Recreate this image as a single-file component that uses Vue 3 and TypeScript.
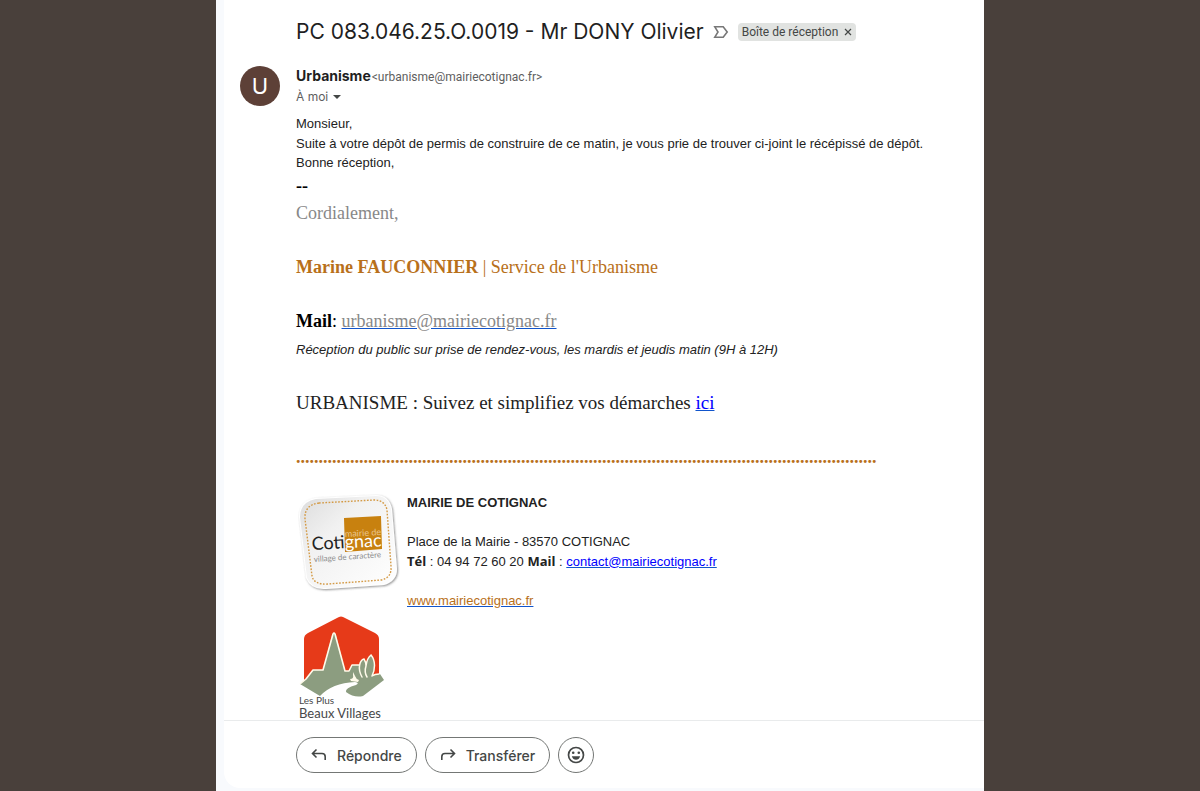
<script setup lang="ts">
const subject = 'PC 083.046.25.O.0019 - Mr DONY Olivier'
const sender = { name: 'Urbanisme', email: 'urbanisme@mairiecotignac.fr' }
const contactEmail = 'contact@mairiecotignac.fr'
const dots = '.'.repeat(129)
</script>

<template>
  <div class="window">
    <main class="mail">
      <div class="scroll">
        <header class="subject-row">
          <h1>{{ subject }}</h1>
          <button class="important" type="button" aria-label="Marquer comme important">
            <svg width="16" height="14" viewBox="0 0 16 14">
              <path d="M1.8 1.8H10.2L14.2 7L10.2 12.2H1.8L5 7Z" fill="none" stroke="#777" stroke-width="1.6" />
            </svg>
          </button>
          <span class="chip">
            Boîte de réception
            <button type="button" aria-label="Retirer le libellé">
              <svg width="8" height="8" viewBox="0 0 8 8">
                <path d="M1 1L7 7M7 1L1 7" stroke="#444746" stroke-width="1.2" />
              </svg>
            </button>
          </span>
        </header>

        <div class="message">
          <div class="avatar" aria-hidden="true">U</div>
          <div class="content">
            <div class="from">
              <strong>{{ sender.name }}</strong>
              <span>&lt;{{ sender.email }}&gt;</span>
            </div>
            <button class="to" type="button">
              À moi
              <svg width="8" height="4" viewBox="0 0 8 4"><path d="M0 0H8L4 4Z" fill="#444746" /></svg>
            </button>

            <article class="body">
              <p>Monsieur,</p>
              <p>Suite à votre dépôt de permis de construire de ce matin, je vous prie de trouver ci-joint le récépissé de dépôt.</p>
              <p>Bonne réception,</p>

              <section class="signature">
                <p class="dashes">--</p>
                <p class="regards">Cordialement,</p>
                <p class="spaced brown"><b>Marine FAUCONNIER</b> | Service de l'Urbanisme</p>
                <p class="spaced black"><b>Mail</b>: <a class="grey" :href="`mailto:${sender.email}`">{{ sender.email }}</a></p>
                <p class="hours">Réception du public sur prise de rendez-vous, les mardis et jeudis matin (9H à 12H)</p>
                <p class="online">URBANISME : Suivez et simplifiez vos démarches <a href="#">ici</a></p>
                <p class="spaced brown" aria-hidden="true"><b>{{ dots }}</b></p>
              </section>

              <div class="town">
                <div class="logos">
                  <svg width="105" height="106" viewBox="0 0 105 106" role="img" aria-label="Mairie de Cotignac">
                    <defs>
                      <linearGradient id="paper" x1="0" y1="0" x2="1" y2="1">
                        <stop offset="0" stop-color="#dcdcdc" />
                        <stop offset=".35" stop-color="#f1f1f1" />
                        <stop offset="1" stop-color="#fff" />
                      </linearGradient>
                      <filter id="shadow" x="-10%" y="-10%" width="125%" height="125%">
                        <feDropShadow dx="1" dy="1" stdDeviation="1" flood-color="#555" flood-opacity=".65" />
                      </filter>
                    </defs>
                    <path d="M19 8L80 5Q93 5 96 19L101 79Q101 91 88 95L30 99Q15 100 10 88L3 27Q3 11 19 8Z" fill="#fff" filter="url(#shadow)" />
                    <path d="M20 9L80 6Q92 6 95 19L100 79Q100 90 88 94L30 98Q16 99 11 88L4 27Q4 12 20 9Z" fill="url(#paper)" />
                    <path d="M23 13L78 10Q89 10 91 20L95 76Q96 88 85 90L32 94Q18 95 16 86L9 29Q8 15 23 13Z" fill="none" stroke="#d49a45" stroke-width="1.4" stroke-dasharray="1.7 1.5" />
                    <path d="M48 28L85 26L86 59L49 62Z" fill="#c8810f" />
                    <g font-family="Lato, sans-serif">
                      <text x="49" y="47" font-size="9" fill="#e9c48d" transform="rotate(-3 49 47)">mairie de</text>
                      <text x="16" y="60" font-size="18" fill="#222" transform="rotate(-3 16 60)">Coti<tspan fill="#fff">gnac</tspan></text>
                      <text x="18" y="72" font-size="8" fill="#8c8c8c" transform="rotate(-4 18 72)">village de caractère</text>
                    </g>
                  </svg>
                  <svg class="villages" width="96" height="110" viewBox="0 0 96 110" role="img" aria-label="Les Plus Beaux Villages">
                    <path d="M8 71V29Q8 25 12 23L41 8Q45 5 49 8L79 23Q83 25 83 29V64L66 66L50 70L20 68Z" fill="#e63a19" />
                    <path d="M4 74L10 69L17 60H27L36 25Q38 21 40 25L49 61H53L56 55H66V66L84 64L88 70L67 86Q58 88 50 82Q49 78 60 75Q64 73 59 72Q36 73 24 86Z" fill="#8c9d80" />
                    <path d="M4 74L10 69L17 60H27L37 24Q38 22 39 24L49 61H53L56 55H65" fill="none" stroke="#fffbea" stroke-width="1.6" stroke-linejoin="round" />
                    <path d="M66 67C61 58 64 50 68 49Q70 52 70 56Q71 48 75 45C79 51 80 60 76 66Z" fill="#8c9d80" />
                    <path d="M66 67C61 58 64 50 68 49Q70 52 70 56Q71 48 75 45C80 51 79 60 76 66M70 56Q68 62 71 67M76 66Q79 64 83 64" fill="none" stroke="#fffbea" stroke-width="1.5" stroke-linecap="round" />
                    <path d="M57 62L59 66Q60 69 63 70L62 72L55 71L54 69Q58 69 57 65Z" fill="#fffbea" />
                    <g font-family="Lato, sans-serif" fill="#48484a">
                      <text x="3" y="94" font-size="10">Les Plus</text>
                      <text x="3" y="108" font-size="13">Beaux Villages</text>
                    </g>
                  </svg>
                </div>
                <address>
                  <p><b>MAIRIE DE COTIGNAC</b></p>
                  <p class="gap">Place de la Mairie - 83570 COTIGNAC</p>
                  <p><b class="label">Tél</b> : 04 94 72 60 20 <b class="label">Mail</b> : <a :href="`mailto:${contactEmail}`">{{ contactEmail }}</a></p>
                  <p class="gap"><a class="site" href="#">www.mairiecotignac.fr</a></p>
                </address>
              </div>
            </article>
          </div>
        </div>
      </div>

      <footer class="actions">
        <button class="pill" type="button">
          <svg width="16" height="14" viewBox="0 0 16 14" fill="none" stroke="#444746" stroke-width="1.6">
            <path d="M5.5 1.5L1.5 5.5L5.5 9.5M1.5 5.5H11Q14.2 5.5 14.2 8.7V12" />
          </svg>
          Répondre
        </button>
        <button class="pill" type="button">
          <svg width="16" height="14" viewBox="0 0 16 14" fill="none" stroke="#444746" stroke-width="1.6">
            <path d="M10.5 1.5L14.5 5.5L10.5 9.5M14.5 5.5H5Q1.8 5.5 1.8 8.7V12" />
          </svg>
          Transférer
        </button>
        <button class="pill round" type="button" aria-label="Ajouter une réaction">
          <svg width="18" height="18" viewBox="0 0 18 18">
            <circle cx="9" cy="9" r="7.5" fill="none" stroke="#444746" stroke-width="1.7" />
            <circle cx="6.2" cy="6.8" r="1.3" fill="#444746" />
            <circle cx="11.8" cy="6.8" r="1.3" fill="#444746" />
            <path d="M4.8 10.3H13.2Q12 13.8 9 13.8Q6 13.8 4.8 10.3Z" fill="#444746" />
          </svg>
        </button>
      </footer>
    </main>
  </div>
</template>

<style>
body {
  margin: 0;
  background: #49403b;
}
</style>

<style scoped>
.window {
  box-sizing: border-box;
  width: 64%;
  height: 100vh;
  margin: 0 auto;
  padding: 0 0 3px 8px;
  background: #f8fafd;
  font-family: Inter, "Liberation Sans", sans-serif;
  color: #1f1f1f;
}
.mail {
  display: flex;
  flex-direction: column;
  height: 100%;
  background: #fff;
  border-radius: 0 0 0 16px;
}
.scroll {
  flex: 1;
  min-height: 0;
  overflow-y: auto;
  scrollbar-width: none;
}
h1, p {
  margin: 0;
}
button {
  padding: 0;
  border: 0;
  background: none;
  font: inherit;
  color: inherit;
  cursor: pointer;
}
svg {
  display: block;
}
.subject-row {
  display: flex;
  align-items: center;
  padding: 18px 16px 0 72px;
}
h1 {
  font-size: 21px;
  line-height: 28px;
  font-weight: 400;
}
.important {
  margin: 0 9px 0 9px;
}
.chip {
  display: flex;
  align-items: center;
  gap: 6px;
  padding: 0 4px;
  border-radius: 4px;
  background: #e1e3e1;
  color: #444746;
  font-family: Roboto, sans-serif;
  font-size: 12px;
  line-height: 18px;
}
.message {
  display: flex;
  gap: 16px;
  padding: 20px 16px 0;
}
.avatar {
  flex: none;
  width: 40px;
  height: 40px;
  border-radius: 50%;
  background: #5d4037;
  color: #fff;
  font-size: 22px;
  line-height: 40px;
  text-align: center;
}
.from {
  display: flex;
  align-items: baseline;
  gap: 1px;
  line-height: 20px;
}
.from strong {
  font-size: 14px;
}
.from span {
  font-family: Roboto, sans-serif;
  font-size: 12px;
  color: #5e5e5e;
}
.to {
  display: flex;
  align-items: center;
  gap: 5px;
  font-size: 12px;
  line-height: 20px;
  color: #5e5e5e;
}
.body {
  padding-top: 7px;
  font-family: "Liberation Sans", Arial, sans-serif;
  font-size: 13px;
  line-height: 1.5;
  color: #222;
}
.signature {
  font-family: "Liberation Serif", "Times New Roman", serif;
  font-size: 18px;
  line-height: 27px;
}
.dashes {
  font-weight: 700;
  color: #000;
}
.regards {
  color: #888;
}
.spaced {
  padding-top: 27px;
}
.brown {
  color: #b8701a;
}
.black {
  color: #000;
}
a {
  color: #00f;
  text-decoration-color: #15c;
}
a.grey {
  color: #888;
}
.hours {
  padding-top: 5px;
  font: italic 13px/20px "Liberation Sans", Arial, sans-serif;
}
.online {
  padding-top: 29px;
  font-size: 19px;
}
.signature .spaced:last-child {
  padding-top: 28px;
}
.town {
  display: flex;
  gap: 6px;
  padding-top: 19px;
}
.logos {
  flex: none;
}
.villages {
  margin-top: 14px;
}
address {
  padding-top: 3px;
  font-style: normal;
}
.gap {
  padding-top: 20px;
}
.label {
  font-family: "Open Sans", sans-serif;
  line-height: 1;
}
a.site {
  color: #b8701a;
}
.actions {
  display: flex;
  gap: 8px;
  padding: 16px 16px 15px 72px;
  border-top: 1px solid #e9ebec;
}
.pill {
  box-sizing: border-box;
  display: flex;
  align-items: center;
  gap: 10px;
  height: 36px;
  padding: 0 14px;
  border: 1px solid #747775;
  border-radius: 18px;
  font-size: 14px;
  font-weight: 500;
  color: #444746;
}
.round {
  justify-content: center;
  width: 36px;
  padding: 0;
}
</style>
